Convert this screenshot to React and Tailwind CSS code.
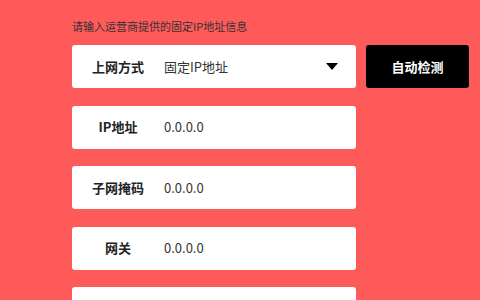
import React from "react";

const font = { fontFamily: '"Noto Sans CJK SC", "Noto Sans", sans-serif' };

function Row({ label, children }) {
  return (
    <div className="flex items-center w-[284px] h-[43px] bg-white rounded-[3px]">
      <div className="w-[92px] text-center text-[13px] font-bold text-[#222]">{label}</div>
      <div className="flex-1 flex items-center pr-[18px] text-[13px] text-[#333]">{children}</div>
    </div>
  );
}

export default function App() {
  return (
    <div className="w-[480px] h-[300px] overflow-hidden bg-[#ff5a5a] pl-[72px] pt-[17px]" style={font}>
      <p className="text-[11px] leading-[18px] text-[#333] mb-[10px]">请输入运营商提供的固定IP地址信息</p>
      <div className="flex flex-col gap-[17.5px]">
        <div className="flex gap-[10px]">
          <Row label="上网方式">
            <span className="flex-1">固定IP地址</span>
            <svg width="12" height="7" viewBox="0 0 12 7">
              <path d="M0 0H12L6 7Z" fill="#000" />
            </svg>
          </Row>
          <button className="w-[103px] h-[43px] bg-black rounded-[3px] text-white text-[13px] font-bold">
            自动检测
          </button>
        </div>
        <Row label="IP地址">0.0.0.0</Row>
        <Row label="子网掩码">0.0.0.0</Row>
        <Row label="网关">0.0.0.0</Row>
        <Row label="首选DNS">0.0.0.0</Row>
      </div>
    </div>
  );
}
